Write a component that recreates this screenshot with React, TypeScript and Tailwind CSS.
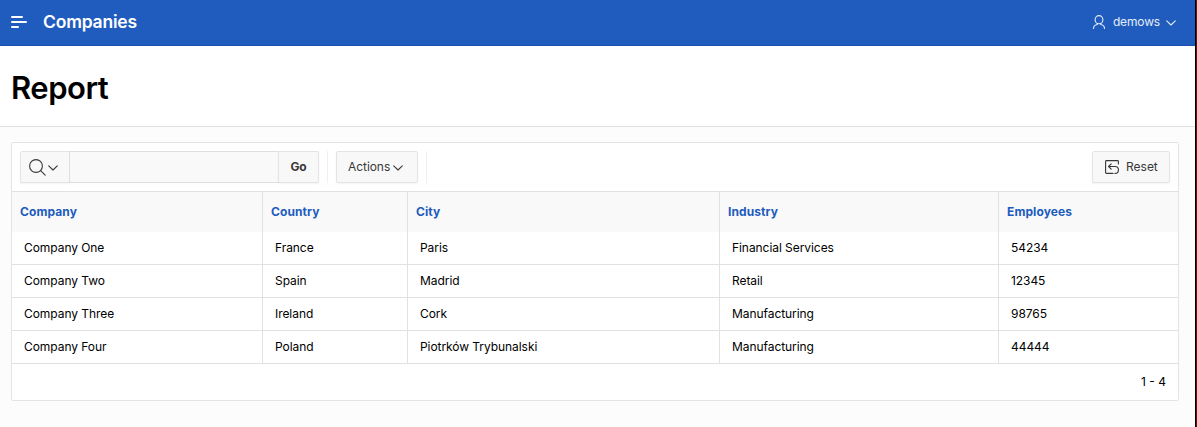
import React from "react";

const columns = ["Company", "Country", "City", "Industry", "Employees"];

const rows = [
  ["Company One", "France", "Paris", "Financial Services", "54234"],
  ["Company Two", "Spain", "Madrid", "Retail", "12345"],
  ["Company Three", "Ireland", "Cork", "Manufacturing", "98765"],
  ["Company Four", "Poland", "Piotrków Trybunalski", "Manufacturing", "44444"],
];

const Chevron = ({ className = "" }: { className?: string }) => (
  <svg className={className} width="10" height="6" viewBox="0 0 10 6" fill="none" stroke="currentColor" strokeWidth="1.1" strokeLinecap="round" strokeLinejoin="round">
    <path d="M0.7 0.8 L5 5 L9.3 0.8" />
  </svg>
);

const MenuIcon = () => (
  <svg width="16" height="12" viewBox="0 0 16 12" fill="none" stroke="currentColor" strokeWidth="2" strokeLinecap="round">
    <path d="M1 1H11M1 6H15M1 11H7" />
  </svg>
);

const UserIcon = () => (
  <svg width="12" height="14" viewBox="0 0 12 14" fill="none" stroke="currentColor" strokeWidth="1.1" strokeLinecap="round">
    <ellipse cx="6" cy="4.7" rx="3.9" ry="4.1" />
    <path d="M0.5 13.5C0.5 11.3 1.3 10.6 2.6 10.1L4.3 9.4V8.3M11.5 13.5C11.5 11.3 10.7 10.6 9.4 10.1L7.7 9.4V8.3" />
  </svg>
);

const SearchIcon = () => (
  <svg width="17" height="17" viewBox="0 0 17 17" fill="none" stroke="currentColor" strokeWidth="1.1" strokeLinecap="round">
    <circle cx="7" cy="7" r="6.4" />
    <path d="M11.6 11.6L16.2 16.2" />
  </svg>
);

const ResetIcon = () => (
  <svg width="14" height="14" viewBox="0 0 14 14" fill="none" stroke="currentColor" strokeWidth="1.1" strokeLinecap="round" strokeLinejoin="round">
    <path d="M13.4 4V1.5Q13.4 0.6 12.5 0.6H1.5Q0.6 0.6 0.6 1.5V12.5Q0.6 13.4 1.5 13.4H8" />
    <path d="M6.2 3.9L3.6 6.5L6.2 9.1M3.6 6.5H10A3.45 3.45 0 0 1 10 13.4" />
  </svg>
);

export default function App() {
  return (
    <div className="flex h-[427px] w-[1197px] overflow-hidden font-['Inter',sans-serif] text-[12px] leading-4 tracking-[-0.06px] text-black">
      <div className="flex min-w-0 flex-1 flex-col bg-[#fcfcfc]">
        <header className="flex h-[46px] shrink-0 items-center border-b border-[#1c51a9] bg-[#205cbe] pr-[19px] pb-px pl-[11px] text-white">
          <MenuIcon />
          <h1 className="ml-4 text-[17.5px] leading-6 font-semibold tracking-[-0.2px]">Companies</h1>
          <div className="ml-auto flex items-center text-[#e4ecf8]">
            <UserIcon />
            <span className="ml-2 tracking-[-0.15px]">demows</span>
            <Chevron className="mt-px ml-[6px]" />
          </div>
        </header>
        <div className="flex h-[81px] shrink-0 items-center border-b border-[#e1e1e1] bg-white pl-[11px]">
          <h2 className="pt-[3px] text-[31px] leading-10 font-semibold tracking-[-0.5px]">Report</h2>
        </div>
        <main className="mt-[15px] mr-4 ml-[11px] flex h-[259px] flex-col rounded-xs border border-[#e4e4e4] bg-white">
          <div className="flex h-12 shrink-0 items-center px-2 text-[#383838]">
            <button className="flex h-8 w-[50px] items-center rounded-l-xs border border-[#e4e4e4] bg-[#f8f8f8] pl-2 shadow-[0_1px_2px_rgba(0,0,0,0.05)]">
              <SearchIcon />
              <Chevron className="mt-px ml-[2px]" />
            </button>
            <input aria-label="Search" className="-ml-px h-8 w-[210px] border border-[#dedede] bg-[#f9f9f9] outline-none" />
            <button className="-ml-px h-8 w-[41px] rounded-r-xs border border-[#e4e4e4] bg-[#f8f8f8] font-bold shadow-[0_1px_2px_rgba(0,0,0,0.05)]">Go</button>
            <div className="ml-2 h-8 w-px bg-[#f0f0f0]" />
            <button className="ml-2 flex h-8 w-[82px] items-center rounded-xs border border-[#e4e4e4] bg-[#f8f8f8] pl-[11px] shadow-[0_1px_2px_rgba(0,0,0,0.05)]">
              Actions
              <Chevron className="mt-px ml-[3px]" />
            </button>
            <div className="ml-2 h-8 w-px bg-[#f0f0f0]" />
            <button className="ml-auto flex h-8 w-[78px] items-center rounded-xs border border-[#e4e4e4] bg-[#f8f8f8] pl-3 shadow-[0_1px_2px_rgba(0,0,0,0.05)]">
              <ResetIcon />
              <span className="ml-[7px] tracking-normal">Reset</span>
            </button>
          </div>
          <table className="w-full table-fixed border-separate border-spacing-0 text-left">
            <colgroup>
              <col className="w-[250px]" />
              <col className="w-[145px]" />
              <col className="w-[312px]" />
              <col className="w-[279px]" />
              <col className="w-[180px]" />
            </colgroup>
            <thead>
              <tr className="h-[41px] bg-[#f9f9f9] text-[#205cbe]">
                {columns.map((c) => (
                  <th key={c} className="border-t border-l border-[#e1e1e1] p-0 pl-2 font-bold tracking-[0.1px] first:border-l-0">{c}</th>
                ))}
              </tr>
            </thead>
            <tbody>
              {rows.map((row) => (
                <tr key={row[0]} className="h-[33px]">
                  {row.map((cell, i) => (
                    <td key={i} className="border-b border-l border-[#e1e1e1] p-0 pl-3 first:border-l-0">{cell}</td>
                  ))}
                </tr>
              ))}
            </tbody>
          </table>
          <div className="flex flex-1 items-center justify-end pr-3 tracking-normal">1 - 4</div>
        </main>
      </div>
      <div className="w-px bg-black" />
      <div className="w-px bg-[#6b1206]" />
    </div>
  );
}
